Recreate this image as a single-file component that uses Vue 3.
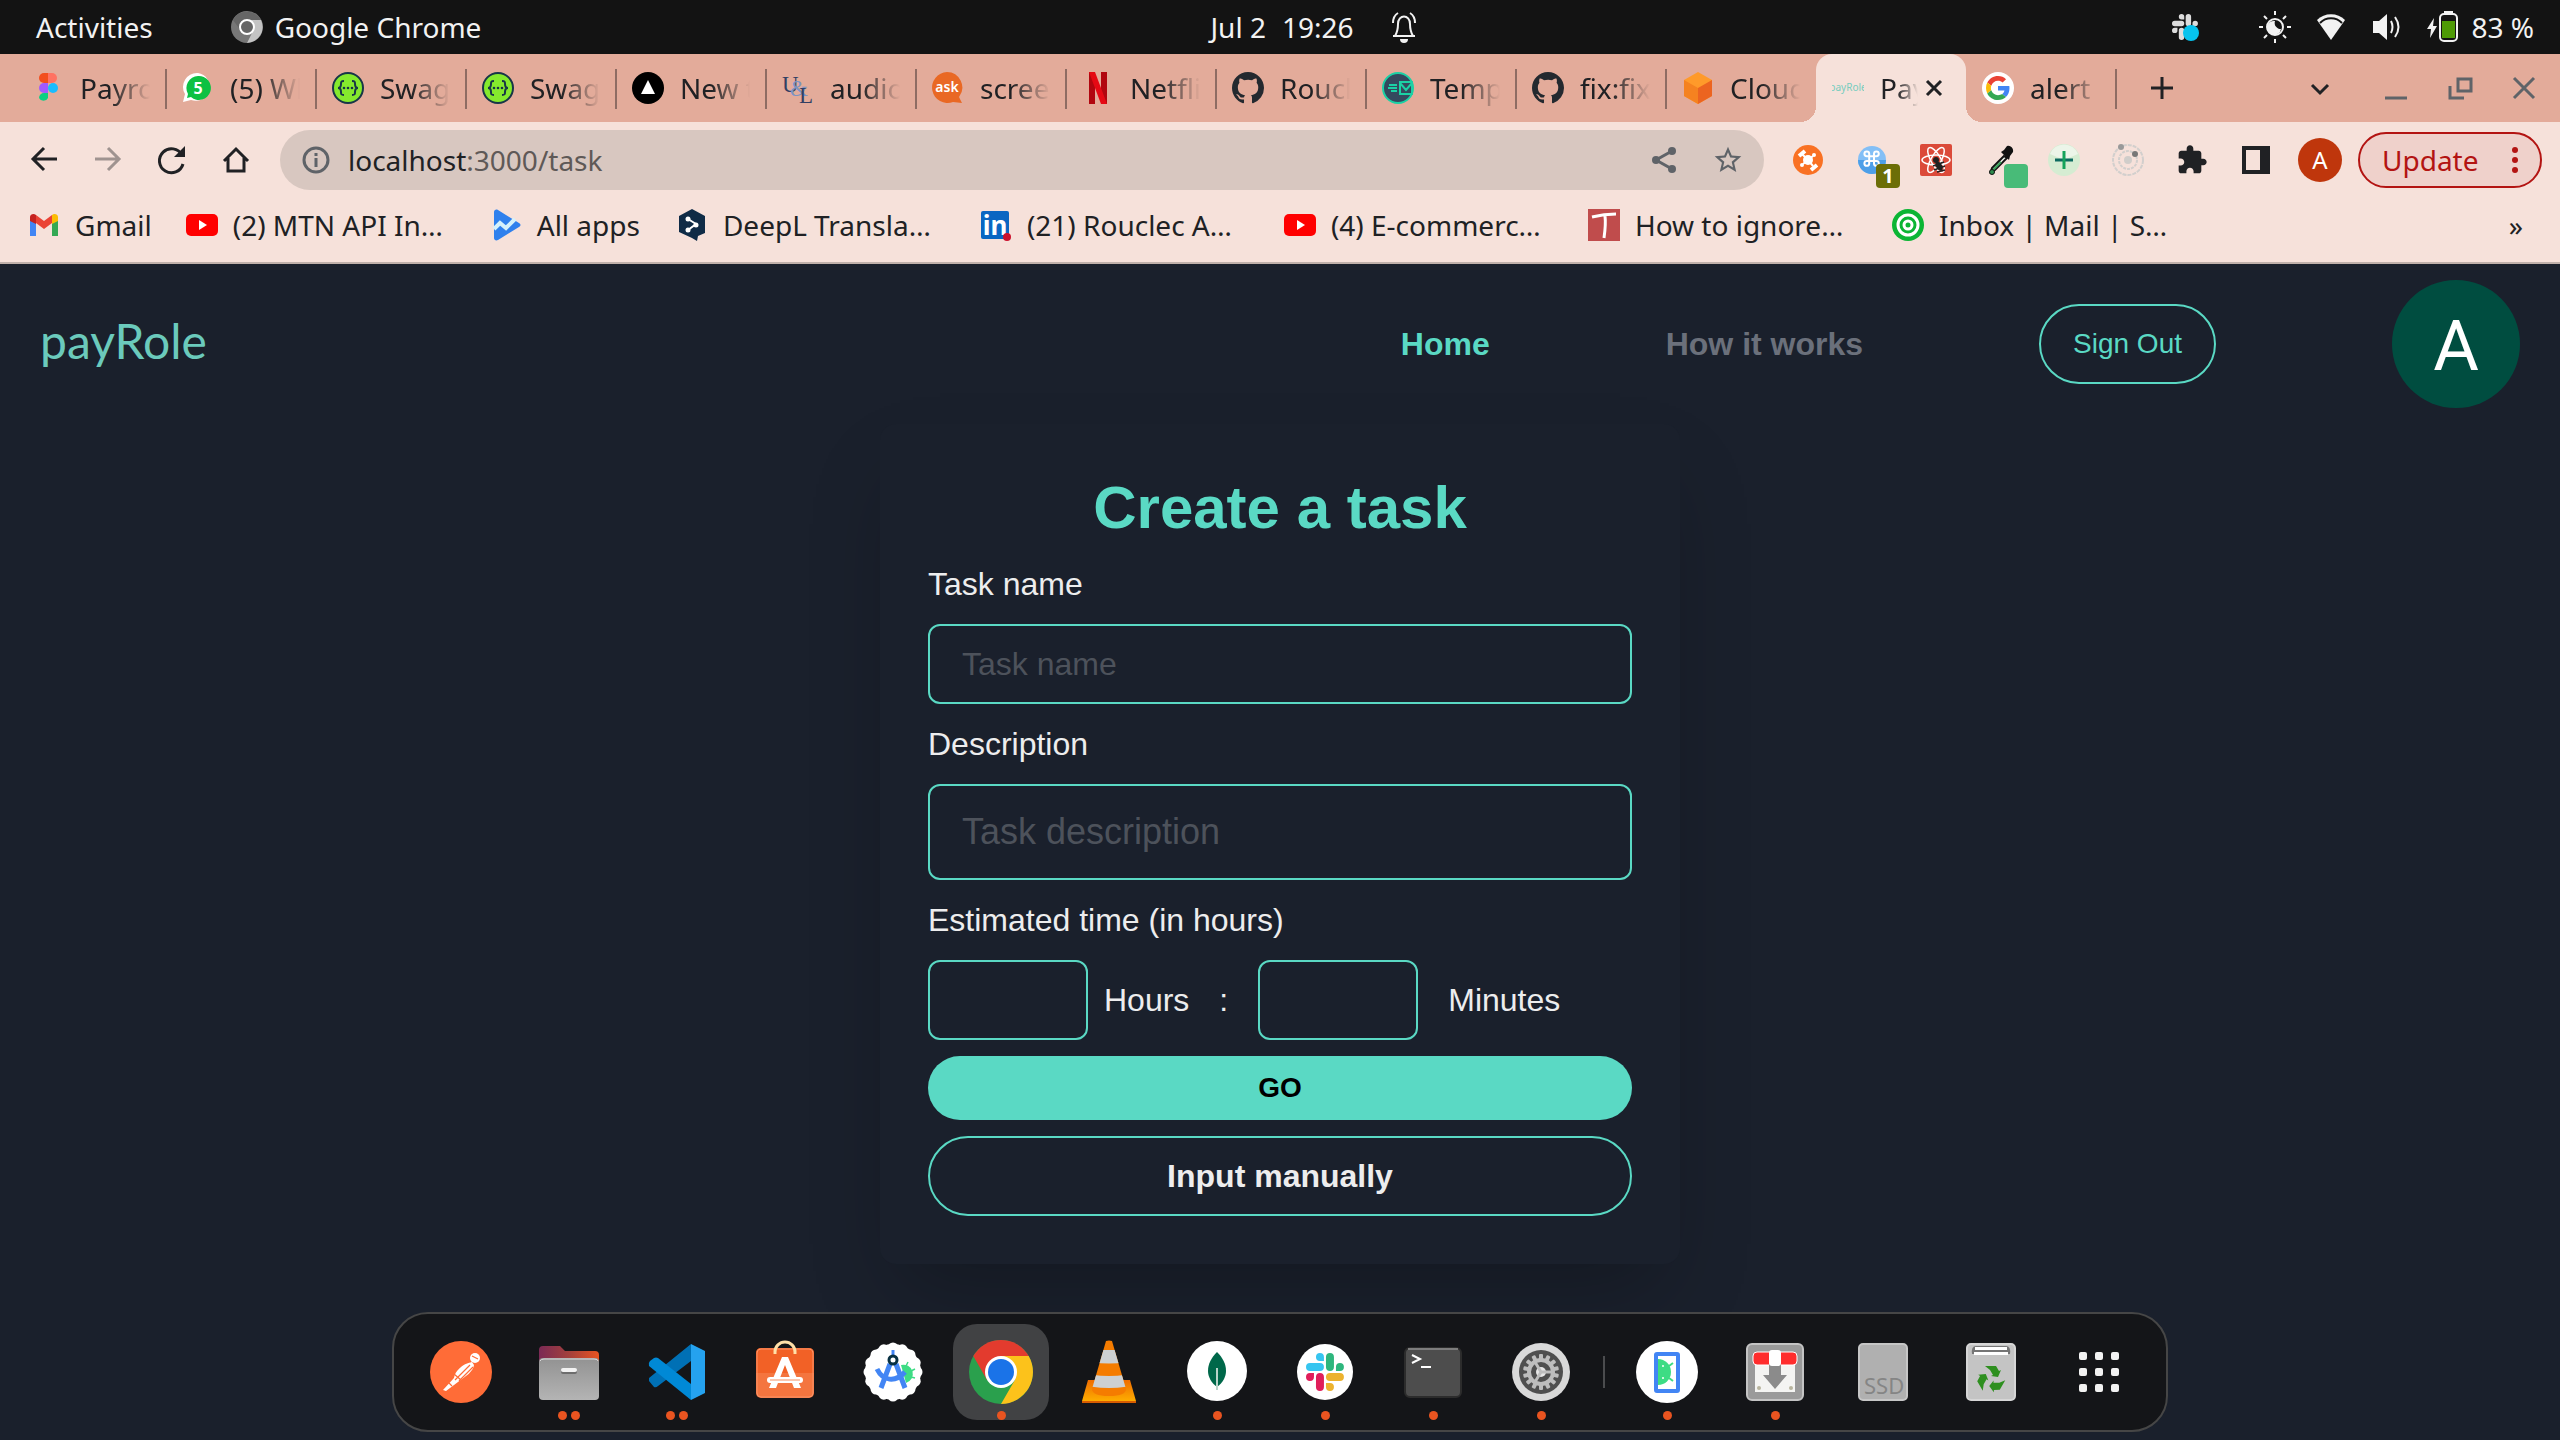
<script setup>
import { ref } from 'vue'

const github = '<path transform="scale(2)" fill="#24292f" d="M8 0C3.58 0 0 3.58 0 8c0 3.54 2.29 6.53 5.47 7.59.4.07.55-.17.55-.38 0-.19-.01-.82-.01-1.49-2.01.37-2.53-.49-2.69-.94-.09-.23-.48-.94-.82-1.13-.28-.15-.68-.52-.01-.53.63-.01 1.08.58 1.23.82.72 1.21 1.87.87 2.33.66.07-.52.28-.87.51-1.07-1.78-.2-3.64-.89-3.64-3.95 0-.87.31-1.59.82-2.15-.08-.2-.36-1.02.08-2.12 0 0 .67-.21 2.2.82.64-.18 1.32-.27 2-.27s1.36.09 2 .27c1.53-1.04 2.2-.82 2.2-.82.44 1.1.16 1.92.08 2.12.51.56.82 1.27.82 2.15 0 3.07-1.87 3.75-3.65 3.95.29.25.54.73.54 1.48 0 1.07-.01 1.93-.01 2.2 0 .21.15.46.55.38A8.01 8.01 0 0 0 16 8c0-4.42-3.58-8-8-8z"/>'
const swagger = '<circle cx="16" cy="16" r="15" fill="#85ea2d" stroke="#173647" stroke-width="2"/><g fill="none" stroke="#173647" stroke-width="2"><path d="M12 9c-3 0-3 1-3 3s0 4-3 4c3 0 3 2 3 4s0 3 3 3M20 9c3 0 3 1 3 3s0 4 3 4c-3 0-3 2-3 4s0 3-3 3"/></g><g fill="#173647"><circle cx="12" cy="16" r="1.3"/><circle cx="16" cy="16" r="1.3"/><circle cx="20" cy="16" r="1.3"/></g>'
const youtube = '<rect y="5" width="32" height="22" rx="5" fill="#f00"/><path d="M13 11v10l8-5z" fill="#fff"/>'
const slackPaths = [
  'M5.042 15.165a2.528 2.528 0 0 1-2.52 2.523A2.528 2.528 0 0 1 0 15.165a2.527 2.527 0 0 1 2.522-2.52h2.52v2.52zM6.313 15.165a2.527 2.527 0 0 1 2.521-2.52 2.527 2.527 0 0 1 2.521 2.52v6.313A2.528 2.528 0 0 1 8.834 24a2.528 2.528 0 0 1-2.521-2.522v-6.313z',
  'M8.834 5.042a2.528 2.528 0 0 1-2.521-2.52A2.528 2.528 0 0 1 8.834 0a2.528 2.528 0 0 1 2.521 2.522v2.52H8.834zM8.834 6.313a2.528 2.528 0 0 1 2.521 2.521 2.528 2.528 0 0 1-2.521 2.521H2.522A2.528 2.528 0 0 1 0 8.834a2.528 2.528 0 0 1 2.522-2.521h6.312z',
  'M18.956 8.834a2.528 2.528 0 0 1 2.522-2.521A2.528 2.528 0 0 1 24 8.834a2.528 2.528 0 0 1-2.522 2.521h-2.522V8.834zM17.688 8.834a2.528 2.528 0 0 1-2.523 2.521 2.527 2.527 0 0 1-2.52-2.521V2.522A2.527 2.527 0 0 1 15.165 0a2.528 2.528 0 0 1 2.523 2.522v6.312z',
  'M15.165 18.956a2.528 2.528 0 0 1 2.523 2.522A2.528 2.528 0 0 1 15.165 24a2.527 2.527 0 0 1-2.52-2.522v-2.522h2.52zM15.165 17.688a2.527 2.527 0 0 1-2.52-2.523 2.526 2.526 0 0 1 2.52-2.52h6.313A2.527 2.527 0 0 1 24 15.165a2.528 2.528 0 0 1-2.522 2.523h-6.313z'
]
const slack = (colours) => slackPaths.map((d, i) => `<path fill="${colours[i]}" d="${d}"/>`).join('')

const tabs = [
  { label: 'Payrole', icon: '<path d="M7 6a5 5 0 0 1 5-5h4v10h-4a5 5 0 0 1-5-5z" fill="#f24e1e"/><path d="M16 1h4a5 5 0 0 1 0 10h-4z" fill="#ff7262"/><path d="M7 16a5 5 0 0 1 5-5h4v10h-4a5 5 0 0 1-5-5z" fill="#a259ff"/><circle cx="21" cy="16" r="5" fill="#1abcfe"/><path d="M7 26a5 5 0 0 1 5-5h4v5a5 5 0 0 1-9 0z" fill="#0acf83"/>' },
  { label: '(5) WhatsApp', icon: '<path d="M16 1a14 14 0 1 1-7 27l-8 2 2-8A14 14 0 0 1 16 1z" fill="#fff"/><path d="M16 4a12 12 0 1 1-7 21l-4 1 1-4A12 12 0 0 1 16 4z" fill="#0cc143"/><text x="16" y="22" text-anchor="middle" font-size="16" font-weight="700" fill="#fff">5</text>' },
  { label: 'Swagger', icon: swagger },
  { label: 'Swagger', icon: swagger },
  { label: 'New tab', icon: '<circle cx="16" cy="16" r="16"/><path d="M16 8l7 14H9z" fill="#fff"/>' },
  { label: 'audio', icon: '<g font-family="Liberation Serif, serif"><text x="0" y="20" font-size="23" fill="#323f63">U</text><text x="8" y="24" font-size="23" fill="#7b93c4">&amp;</text><text x="17" y="31" font-size="23" fill="#323f63">L</text></g>' },
  { label: 'screen', icon: '<path d="M15 0a15.500 15.500 0 0 1 12 25l3 6-9-1A15.500 15.500 0 1 1 15 0z" fill="#e96824"/><text x="15" y="20" text-anchor="middle" font-size="14" font-weight="600" fill="#fff">ask</text>' },
  { label: 'Netflix', icon: '<path d="M7 0h6v32H7zM19 0h6v32h-6z" fill="#b1060f"/><path d="M7 0h6l12 32h-6z" fill="#e50914"/>' },
  { label: 'Rouclec', icon: github },
  { label: 'Templates', icon: '<circle cx="16" cy="16" r="15" fill="#34495e" stroke="#1bd1a5" stroke-width="2"/><path d="M18 10h12v12H18zM18 11l6 7 6-7M7 13h8M6 16h9M9 19h6" fill="none" stroke="#1bd1a5" stroke-width="2"/>' },
  { label: 'fix:fixed', icon: github },
  { label: 'Cloud', icon: '<path d="M16 0l14 8v16l-14 8L2 24V8z" fill="#ff9a2a"/><path d="M2 8l14 8v16L2 24z" fill="#f58220"/><path d="M30 8l-14 8v16l14-8z" fill="#ec6420"/>', bare: true },
  { label: 'Payrole', icon: '<text x="16" y="19" text-anchor="middle" font-size="10" fill="#77cdbf">payRole</text>', active: true },
  { label: 'alert', icon: '<circle cx="16" cy="16" r="16" fill="#fff"/><g transform="translate(4 4) scale(.5)"><path fill="#ea4335" d="M24 9.500c3.540 0 6.710 1.220 9.210 3.600l6.850-6.850C35.900 2.380 30.470 0 24 0 14.620 0 6.510 5.380 2.560 13.220l7.980 6.190C12.430 13.720 17.740 9.500 24 9.500z"/><path fill="#4285f4" d="M46.980 24.550c0-1.570-.15-3.090-.38-4.550H24v9.020h12.940c-.58 2.960-2.260 5.480-4.780 7.180l7.730 6c4.510-4.180 7.090-10.360 7.090-17.650z"/><path fill="#fbbc05" d="M10.530 28.590c-.48-1.450-.76-2.990-.76-4.590s.27-3.140.76-4.590l-7.980-6.190C.92 16.460 0 20.120 0 24c0 3.880.92 7.540 2.560 10.780l7.970-6.190z"/><path fill="#34a853" d="M24 48c6.480 0 11.930-2.130 15.890-5.810l-7.730-6c-2.150 1.450-4.920 2.300-8.160 2.300-6.260 0-11.570-4.220-13.470-9.910l-7.980 6.190C6.510 42.620 14.620 48 24 48z"/></g>' }
]

const navButtons = [
  { label: 'Back', icon: '<path d="M29 15H5M16 4L5 15l11 11"/>' },
  { label: 'Forward', dim: true, icon: '<path d="M3 15h24M16 4l11 11-11 11"/>' },
  { label: 'Reload', icon: '<path d="M27 20a12 12 0 1 1-1-9"/><path d="M29 2v11H18z" fill="#202124" stroke="none"/>' },
  { label: 'Home page', icon: '<path d="M4 17L16 5l12 12M8 14v13h16V14"/>' }
]

const extensions = [
  { label: 'Blocks', icon: '<circle cx="16" cy="16" r="15" fill="#f97123"/><circle cx="16" cy="16" r="5" fill="#fff"/><path d="M16 16l-6-6M16 16l5-4M16 16l-5 4M16 16l5 6" stroke="#fff" stroke-width="2"/><path d="M7 12l6-5M19 26l6-5" stroke="#fff" stroke-width="4"/><circle cx="22" cy="11" r="2" fill="#fff"/><circle cx="10" cy="21" r="2" fill="#fff"/>' },
  { label: 'Shortcuts', badge: '1', icon: '<circle cx="16" cy="16" r="14" fill="#83bff6"/><path d="M2 16a14 14 0 0 0 28 0z" fill="#4d9fe8"/><path transform="translate(6 5) scale(.8)" d="M18 3a3 3 0 0 0-3 3v12a3 3 0 1 0 3-3H6a3 3 0 1 0 3 3V6a3 3 0 1 0-3 3h12a3 3 0 0 0 0-6z" fill="none" stroke="#fff" stroke-width="2.500"/>' },
  { label: 'React tools', icon: '<rect width="32" height="32" rx="2" fill="#db4a39"/><g fill="none" stroke="#fff" stroke-width="1.500"><ellipse cx="16" cy="16" rx="14" ry="5"/><ellipse cx="16" cy="16" rx="14" ry="5" transform="rotate(60 16 16)"/><ellipse cx="16" cy="16" rx="14" ry="5" transform="rotate(120 16 16)"/></g><g fill="#222"><circle cx="16" cy="16" r="3"/><ellipse cx="19" cy="22" rx="3" ry="5" transform="rotate(-30 19 22)"/></g><path d="M13 22l11-4M14 26l11-4M17 28l8-2" stroke="#222" stroke-width="1.500"/>' },
  { label: 'Colour picker', swatch: true, icon: '<path d="M20 12L8 24l-1 4 4-2 12-12z" fill="#e9f2ea" stroke="#111" stroke-width="2"/><path d="M17 18l-8 8" stroke="#38a05a" stroke-width="2"/><path d="M17 8l8 8 1-4 3-4a5 5 0 0 0-6-6l-3 4z" fill="#111"/><circle cx="8" cy="28" r="2.500" fill="#2e8b4d" stroke="#111"/>' },
  { label: 'Add', icon: '<circle cx="16" cy="16" r="16" fill="#d5ecd2"/><path d="M2 10a15 15 0 0 1 28 0l-14 6z" fill="#ecf5e9"/><path d="M7 16h18" stroke="#0c6b60" stroke-width="3"/><path d="M16 7v18" stroke="#14a35b" stroke-width="3"/>' },
  { label: 'Orbit', icon: '<g fill="none" stroke="#d2cfcd" stroke-width="2"><circle cx="16" cy="16" r="15" stroke-dasharray="4 1"/><circle cx="16" cy="16" r="9" stroke-dasharray="3 1"/></g><circle cx="16" cy="16" r="4" fill="#d0cdca"/><circle cx="9" cy="3" r="3" fill="#999"/><circle cx="23" cy="10" r="3" fill="#777"/>' },
  { label: 'Extensions', icon: '<path transform="scale(1.333)" fill="#202124" d="M20.500 11H19V7c0-1.100-.9-2-2-2h-4V3.500C13 2.120 11.880 1 10.500 1S8 2.120 8 3.500V5H4c-1.100 0-1.990.9-1.990 2v3.800H3.500c1.490 0 2.700 1.210 2.700 2.700s-1.210 2.700-2.700 2.700H2V20c0 1.100.9 2 2 2h3.800v-1.500c0-1.490 1.210-2.700 2.700-2.700 1.490 0 2.700 1.210 2.700 2.700V22H17c1.100 0 2-.9 2-2v-4h1.500c1.380 0 2.500-1.120 2.500-2.500S21.880 11 20.500 11z"/>' },
  { label: 'Side panel', icon: '<path d="M2 2h28v28H2zM6 6v20h14V6z" fill="#202124" fill-rule="evenodd"/>' }
]

const bookmarks = [
  { label: 'Gmail', icon: '<path d="M2 8v19h6V14z" fill="#4285f4"/><path d="M30 8v19h-6V14z" fill="#34a853"/><path d="M2 8l6 6 8 6 8-6V6l-8 6-8-6z" fill="#ea4335"/><path d="M2 12V8c0-3 4-4 6-2v9z" fill="#c5221f"/><path d="M30 12V8c0-3-4-4-6-2v9z" fill="#fbbc04"/>' },
  { label: '(2) MTN API In…', long: true, icon: youtube },
  { label: 'All apps', icon: '<path d="M4 3c0-2 2-3 4-2l21 13c2 1 2 3 0 4L8 31c-2 1-4 0-4-2z" fill="#2f80ed"/><path d="M4 20l6-6 6 5 9-9" fill="none" stroke="#d5f1fb" stroke-width="4"/>' },
  { label: 'DeepL Transla…', long: true, icon: '<path d="M16 0l13 7v17l-7 3-1 5-5-3-13-6V7z" fill="#0f2b46"/><path d="M12 10l8 5-8 6" fill="none" stroke="#fff" stroke-width="2"/><g fill="#fff"><circle cx="12" cy="10" r="2.500"/><circle cx="20" cy="16" r="2.500"/><circle cx="12" cy="21" r="2.500"/></g>' },
  { label: '(21) Rouclec A…', long: true, icon: '<rect x="1" y="2" width="28" height="28" rx="2" fill="#0a66c2"/><text x="15" y="26" text-anchor="middle" font-size="26" font-weight="700" fill="#fff">in</text><circle cx="27" cy="28" r="4" fill="#cb112d"/>' },
  { label: '(4) E-commerc…', long: true, icon: youtube },
  { label: 'How to ignore…', long: true, icon: '<rect width="32" height="32" fill="#c04c4c"/><path d="M4 8c8-2 16-3 24-3M17 7c1 8 0 15-1 22" fill="none" stroke="#fff" stroke-width="3"/>' },
  { label: 'Inbox | Mail | S…', long: true, icon: '<circle cx="16" cy="16" r="16" fill="#0bb534"/><circle cx="16" cy="16" r="10" fill="none" stroke="#fff" stroke-width="3"/><circle cx="16" cy="16" r="4" fill="none" stroke="#fff" stroke-width="3"/>' }
]

const scallop = Array.from({ length: 16 }, (_, i) => {
  const a = (i * Math.PI) / 8
  return `<circle cx="${(32 + 24 * Math.cos(a)).toFixed(1)}" cy="${(32 + 24 * Math.sin(a)).toFixed(1)}" r="5.5" fill="#fff"/>`
}).join('')
const teeth = Array.from({ length: 14 }, (_, i) => `<rect x="30" y="14" width="4" height="7" rx="1" transform="rotate(${i * 25.714} 32 32)" fill="#bdbdbd"/>`).join('')

const dockApps = [
  { label: 'Postman', dots: 0, icon: '<circle cx="32" cy="32" r="31" fill="#ff6c37"/><g fill="#fff"><circle cx="46" cy="18" r="5"/><path d="M43 22l2 3c-1 7-8 11-16 17L17 51l-3-1 11-12c1-7 8-14 18-16z"/></g><path d="M41 25L26 40M44 27L30 41M25 34l7 6M20 43l3 3M43 16l6 3" stroke="#ff6c37" stroke-width="1.200"/>' },
  { label: 'Files', dots: 2, icon: '<defs><linearGradient id="folder"><stop offset="0" stop-color="#7b2a55"/><stop offset=".5" stop-color="#a3403c"/><stop offset="1" stop-color="#e95420"/></linearGradient><linearGradient id="drawer" x2="0" y2="1"><stop offset="0" stop-color="#929292"/><stop offset="1" stop-color="#b4b4b4"/></linearGradient></defs><path d="M2 25V10a4 4 0 0 1 4-4h17l5 5h30a4 4 0 0 1 4 4v12z" fill="url(#folder)"/><rect x="2" y="18" width="60" height="42" rx="4" fill="url(#drawer)"/><path d="M3 21q1-2 4-2h50q4 0 4 2" fill="none" stroke="#dcdcdc"/><rect x="24" y="30" width="16" height="4" rx="2" fill="#6d6d6d"/><rect x="24" y="28" width="16" height="4" rx="2" fill="#f2f2f2"/>' },
  { label: 'Visual Studio Code', dots: 2, icon: '<path d="M4 41l5 6q2 1 4-1l33-25V4L4 38z" fill="#0070b5"/><path d="M4 26q-1-3 1-5l4-3q2-1 4 0l33 26v16z" fill="#0089d6"/><path d="M46 4l14 7v42l-14 7z" fill="#25a2ef"/>' },
  { label: 'Software', dots: 0, icon: '<rect x="3" y="8" width="58" height="50" rx="5" fill="#f4753f"/><path d="M3 33V13a5 5 0 0 1 5-5h48a5 5 0 0 1 5 5v20z" fill="#f26126"/><rect x="4" y="9" width="56" height="48" rx="4" fill="none" stroke="#f99468"/><path d="M22 14V12a10 10 0 0 1 20 0v2" fill="none" stroke="#ffe0a8" stroke-width="3"/><path d="M29 17h6l13 31h-7l-9-23-9 23h-7z" fill="#fff"/><rect x="14" y="37" width="36" height="6" rx="3" fill="#fff"/><path d="M17 40h30" stroke="#f9c7b0" stroke-width="2"/>' },
  { label: 'Android Studio', dots: 0, icon: scallop + '<circle cx="32" cy="32" r="28" fill="#fff"/><path d="M40 25a9 9 0 0 1 5 18z" fill="#3ddc84"/><path d="M45 26l2-4M50 31l4-2M50 37l4 1" stroke="#3ddc84" stroke-width="1.500"/><g fill="none" stroke="#4285f4"><path d="M32 10v6" stroke-width="3"/><path d="M29 24L20 48M35 24l9 24" stroke-width="5"/><path d="M16 29c6 12 18 14 28 3" stroke-width="5"/></g><circle cx="32" cy="20" r="4" fill="#fff" stroke="#073042" stroke-width="3"/>' },
  { label: 'Google Chrome', dots: 1, active: true, icon: '<circle cx="32" cy="32" r="32" fill="#2aa04d"/><path d="M32 32L4.300 16A32 32 0 0 1 59.700 16z" fill="#e33b2e"/><path d="M4.300 16L18 40l14-24z" fill="#e33b2e"/><path d="M32 16h27.700A32 32 0 0 1 32 64l13.900-24z" fill="#fcc21b"/><circle cx="32" cy="32" r="16" fill="#fff"/><circle cx="32" cy="32" r="13" fill="#1a73e8"/>' },
  { label: 'VLC', dots: 0, icon: '<defs><linearGradient id="cone" x2="0" y2="1"><stop offset="0" stop-color="#ef6c00"/><stop offset="1" stop-color="#ffb300"/></linearGradient><clipPath id="coneClip"><path d="M29 1q3-1 6 0l14 48q0 7-17 7t-17-7z"/></clipPath></defs><path d="M11 40h42l6 21v2H5v-2z" fill="url(#cone)"/><path d="M5 61h54v2H5z" fill="#d85c00"/><g clip-path="url(#coneClip)"><path d="M10 0h44v60H10z" fill="#f57c00"/><path d="M10 10h44v12q-22 3-44 0z" fill="#cdd0d2"/><path d="M10 34q22 4 44 0v12q-22 4-44 0z" fill="#cdd0d2"/></g>' },
  { label: 'MongoDB Compass', dots: 1, icon: '<circle cx="32" cy="31" r="30" fill="#fff"/><path d="M32 12c12 12 12 26 0 35-12-9-12-23 0-35z" fill="#00684a"/><path d="M32 28v22" stroke="#b9d3c9" stroke-width="2"/>' },
  { label: 'Slack', dots: 1, icon: '<circle cx="32" cy="32" r="28" fill="#fff"/><g transform="translate(13 13) scale(1.580)">' + slack(['#e01e5a', '#36c5f0', '#2eb67d', '#ecb22e']) + '</g>' },
  { label: 'Terminal', dots: 1, icon: '<rect x="4" y="8" width="56" height="49" rx="5" fill="#4d4d4d" stroke="#2c2c2c" stroke-width="2"/><path d="M7 9h50" stroke="#7d7d7d" stroke-width="2"/><path d="M11 15l8 4-8 4M20 27h10" fill="none" stroke="#fff" stroke-width="2"/>' },
  { label: 'Settings', dots: 1, icon: '<circle cx="32" cy="32" r="29" fill="#d9d9d9"/><circle cx="32" cy="32" r="22" fill="#4f4f4f"/>' + teeth + '<circle cx="32" cy="32" r="12" fill="none" stroke="#bdbdbd" stroke-width="4"/><circle cx="32" cy="32" r="5" fill="#e6e6e6"/><path d="M32 32h11M32 32l-6 10M32 32l-6-10" stroke="#bdbdbd" stroke-width="3"/>' }
]

const dockPlaces = [
  { label: 'Emulator', dots: 1, icon: '<circle cx="32" cy="32" r="31" fill="#fff"/><rect x="21" y="14" width="22" height="37" rx="1" fill="none" stroke="#4285f4" stroke-width="4"/><path d="M23 19a13 13 0 0 1 0 26z" fill="#3ddc84"/><path d="M34 26l4-3M34 38l4 3" stroke="#3ddc84" stroke-width="2"/><circle cx="28" cy="26" r="1" fill="#fff"/><circle cx="28" cy="38" r="1" fill="#fff"/>' },
  { label: 'Installer', dots: 1, icon: '<rect x="4" y="4" width="56" height="56" rx="5" fill="#9a9a9a" stroke="#c4c4c4" stroke-width="2"/><path d="M12 20h40v32H12z" fill="#f4f4f2"/><rect x="10" y="12" width="44" height="13" rx="4" fill="#ff2d2d" stroke="#fff"/><path d="M26 24h12v11h6L32 49 20 35h6z" fill="#8b8b8b"/><rect x="26" y="10" width="12" height="16" rx="3" fill="#fff"/><circle cx="16" cy="48" r="2" fill="#b8b49e"/><circle cx="48" cy="48" r="2" fill="#b8b49e"/>' },
  { label: 'SSD drive', dots: 0, icon: '<rect x="8" y="4" width="48" height="56" rx="4" fill="#b0b0b0" stroke="#c6c6c6" stroke-width="2"/><text x="13" y="54" font-size="22" fill="#858585">SSD</text>' },
  { label: 'Trash', dots: 0, icon: '<rect x="8" y="4" width="48" height="56" rx="4" fill="#c4c4c4" stroke="#d6d6d6" stroke-width="2"/><path d="M13 14q-1-8 4-8h30q5 0 4 8z" fill="#757575"/><path d="M16 7h32v3H16zM15 12h34v3H15z" fill="#fff"/><g fill="#2e8f1f"><path d="M26 26h11l3 5 2-1-3 7-7-1 2-1-3-5z"/><path d="M26 26h11l3 5 2-1-3 7-7-1 2-1-3-5z" transform="rotate(120 32 39)"/><path d="M26 26h11l3 5 2-1-3 7-7-1 2-1-3-5z" transform="rotate(240 32 39)"/></g>' },
  { label: 'Show applications', dots: 0, icon: '<g fill="#f2f2f2">' + [12, 28, 44].flatMap((y) => [12, 28, 44].map((x) => `<rect x="${x}" y="${y}" width="8" height="8" rx="2"/>`)).join('') + '</g>' }
]

const trayIcons = [
  { label: 'Night light', icon: '<circle cx="16" cy="16" r="8" fill="none" stroke="#f2f2f2" stroke-width="2"/><path d="M16 10a6 6 0 0 0 6 8 7 7 0 1 1-6-8z" fill="#f2f2f2"/><path d="M16 0v4M16 28v4M0 16h4M28 16h4M5 5l3 3M24 24l3 3M27 5l-3 3M8 24l-3 3" stroke="#f2f2f2" stroke-width="2"/>' },
  { label: 'Wi-Fi', icon: '<path d="M2 9a20 20 0 0 1 28 0L16 29z" fill="#f2f2f2"/><path d="M5 12a15 15 0 0 1 22 0" fill="none" stroke="#131313" stroke-width="2"/>' },
  { label: 'Volume', icon: '<path d="M2 10h6l8-7v26l-8-7H2z" fill="#f2f2f2"/><path d="M20 10q3 6 0 12M24 6q7 10 0 20" fill="none" stroke="#f2f2f2" stroke-width="2"/>' }
]

const taskName = ref('')
const description = ref('')
const hours = ref('')
const minutes = ref('')
</script>

<template>
  <div class="desktop">
    <header class="system-bar">
      <div class="system-left">
        <span>Activities</span>
        <span class="current-app">
          <svg class="icon" viewBox="0 0 32 32" aria-hidden="true"><circle cx="16" cy="16" r="16" fill="#777" /><path d="M16 9h14a16 16 0 0 1-14 23l6-12z" fill="#c4c4c4" /><path d="M2 9a16 16 0 0 1 28 0H16l-6 11z" fill="#666" /><circle cx="16" cy="16" r="7" fill="#666" stroke="#fff" stroke-width="2" /></svg>
          Google Chrome
        </span>
      </div>
      <div class="system-clock">
        <span>Jul 2</span><span>19:26</span>
        <svg class="icon bell" viewBox="0 0 32 32" aria-hidden="true"><path d="M5 25h22M7 25q3-5 3-12c0-10 12-10 12 0q0 7 3 12M5 12q0-7 5-10M27 12q0-7-5-10" fill="none" stroke="#f2f2f2" stroke-width="2" /><path d="M12 28h8a4 4 0 0 1-8 0z" fill="#f2f2f2" /></svg>
      </div>
      <div class="system-tray">
        <svg class="icon slack-tray" viewBox="0 0 32 32" aria-hidden="true"><g transform="translate(3 3) scale(1.08)" v-html="slack(['#ddd', '#ddd', '#ddd', '#ddd'])" /><circle cx="22" cy="22" r="8" fill="#06c3ee" /></svg>
        <svg v-for="t in trayIcons" :key="t.label" class="icon" viewBox="0 0 32 32" role="img" :aria-label="t.label" v-html="t.icon" />
        <span class="battery">
          <svg class="icon" viewBox="0 0 32 32" aria-hidden="true"><path d="M7 7L0 18h4l-1 9 7-12H6z" fill="#f2f2f2" /><rect x="13" y="3" width="17" height="27" rx="4" fill="none" stroke="#f2f2f2" stroke-width="2" /><path d="M17 0h9v3h-9z" fill="#f2f2f2" /><path d="M15 10h13v17H15z" fill="#4e9a06" /></svg>
          83 %
        </span>
      </div>
    </header>

    <div class="tab-strip">
      <div v-for="(tab, i) in tabs" :key="i" class="tab" :class="{ active: tab.active, bare: tab.bare || tab.active }">
        <svg class="icon" viewBox="0 0 32 32" aria-hidden="true" v-html="tab.icon" />
        <span class="tab-label">{{ tab.label }}</span>
        <button v-if="tab.active" class="plain close" aria-label="Close tab">
          <svg class="icon line" viewBox="0 0 32 32"><path d="M9 9l14 14M23 9L9 23" /></svg>
        </button>
      </div>
      <button class="plain new-tab" aria-label="New tab"><svg class="icon line" viewBox="0 0 32 32"><path d="M16 5v22M5 16h22" /></svg></button>
      <div class="window-controls">
        <button class="plain search-tabs" aria-label="Search tabs"><svg class="icon line" viewBox="0 0 32 32"><path d="M8 13l8 8 8-8" /></svg></button>
        <button class="plain grey" aria-label="Minimise"><svg class="icon line" viewBox="0 0 32 32"><path d="M5 26h22" /></svg></button>
        <button class="plain grey" aria-label="Restore"><svg class="icon line" viewBox="0 0 32 32"><path d="M14 7h13v12H14zM6 14v12h14" /></svg></button>
        <button class="plain grey" aria-label="Close window"><svg class="icon line" viewBox="0 0 32 32"><path d="M6 6l20 20M26 6L6 26" /></svg></button>
      </div>
    </div>

    <div class="toolbar">
      <button v-for="b in navButtons" :key="b.label" class="plain" :class="{ dim: b.dim }" :aria-label="b.label">
        <svg class="icon line" viewBox="0 0 32 32" v-html="b.icon" />
      </button>
      <div class="omnibox">
        <svg class="icon line grey" viewBox="0 0 32 32" aria-hidden="true"><circle cx="16" cy="16" r="12" /><path d="M16 14v9M16 9v3" /></svg>
        <span class="address">localhost<span class="path">:3000/task</span></span>
        <button class="plain" aria-label="Share"><svg class="icon" viewBox="0 0 32 32"><path d="M24 7L8 16l16 9" fill="none" stroke="#5f6368" stroke-width="3" /><g fill="#5f6368"><circle cx="24" cy="7" r="4" /><circle cx="8" cy="16" r="4" /><circle cx="24" cy="25" r="4" /></g></svg></button>
        <button class="plain" aria-label="Bookmark"><svg class="icon" viewBox="0 0 24 24"><path fill="#5f6368" d="M22 9.240l-7.190-.62L12 2 9.190 8.630 2 9.240l5.460 4.730L5.820 21 12 17.270 18.180 21l-1.630-7.030L22 9.240zM12 15.400l-3.760 2.270 1-4.280-3.320-2.880 4.380-.38L12 6.100l1.710 4.040 4.380.38-3.320 2.880 1 4.280L12 15.400z" /></svg></button>
      </div>
      <button v-for="e in extensions" :key="e.label" class="plain extension" :aria-label="e.label">
        <svg class="icon" viewBox="0 0 32 32" v-html="e.icon" />
        <span v-if="e.badge" class="badge">{{ e.badge }}</span>
        <span v-if="e.swatch" class="badge swatch"></span>
      </button>
      <button class="plain" aria-label="Profile"><span class="profile">A</span></button>
      <button class="update">Update <svg class="dots" viewBox="0 0 6 28" aria-hidden="true"><circle cx="3" cy="4" r="3" /><circle cx="3" cy="14" r="3" /><circle cx="3" cy="24" r="3" /></svg></button>
    </div>

    <nav class="bookmarks" aria-label="Bookmarks">
      <a v-for="b in bookmarks" :key="b.label" href="#" class="bookmark">
        <svg class="icon" viewBox="0 0 32 32" aria-hidden="true" v-html="b.icon" />
        <span :class="{ long: b.long }">{{ b.label }}</span>
      </a>
      <button class="plain more" aria-label="More bookmarks">»</button>
    </nav>

    <div class="page">
      <header class="site-header">
        <a href="#" class="logo">payRole</a>
        <nav class="site-nav">
          <a href="#" class="current">Home</a>
          <a href="#">How it works</a>
          <button class="sign-out">Sign Out</button>
          <span class="avatar">A</span>
        </nav>
      </header>

      <form class="card" @submit.prevent>
        <h1>Create a task</h1>
        <label for="task-name">Task name</label>
        <input id="task-name" v-model="taskName" type="text" placeholder="Task name" />
        <label for="description">Description</label>
        <textarea id="description" v-model="description" rows="1" placeholder="Task description"></textarea>
        <label for="hours">Estimated time (in hours)</label>
        <div class="duration">
          <input id="hours" v-model="hours" type="text" />
          <label for="hours" class="unit">Hours</label>
          <span>:</span>
          <input id="minutes" v-model="minutes" type="text" />
          <label for="minutes">Minutes</label>
        </div>
        <button class="go" type="submit">GO</button>
        <button class="manual" type="button">Input manually</button>
      </form>
    </div>

    <nav class="dock" aria-label="Dock">
      <button v-for="app in dockApps" :key="app.label" class="tile" :class="{ focused: app.active }" :aria-label="app.label">
        <svg viewBox="0 0 64 64" v-html="app.icon" />
        <span v-if="app.dots" class="running"><i v-for="n in app.dots" :key="n"></i></span>
      </button>
      <span class="divider"></span>
      <button v-for="app in dockPlaces" :key="app.label" class="tile" :aria-label="app.label">
        <svg viewBox="0 0 64 64" v-html="app.icon" />
        <span v-if="app.dots" class="running"><i v-for="n in app.dots" :key="n"></i></span>
      </button>
    </nav>
  </div>
</template>

<style>
body {
  margin: 0;
  background: #1a202c;
}
</style>

<style scoped>
.desktop {
  position: relative;
  display: flex;
  flex-direction: column;
  min-height: 100vh;
  overflow: hidden;
  font-family: "Noto Sans", "Open Sans", sans-serif;
  font-size: 28px;
  line-height: 40px;
  color: #202124;
}
.desktop * {
  box-sizing: border-box;
}
a {
  color: inherit;
  text-decoration: none;
}
button {
  font: inherit;
  cursor: pointer;
}
.icon {
  display: block;
  flex: none;
  width: 32px;
  height: 32px;
}
.line {
  fill: none;
  stroke: #202124;
  stroke-width: 3;
}
.grey.line,
.grey .line {
  stroke: #5f6368;
}
.plain {
  display: flex;
  flex: none;
  align-items: center;
  justify-content: center;
  width: 64px;
  padding: 0;
  border: 0;
  background: none;
  color: inherit;
}
.dim {
  opacity: 0.4;
}

.system-bar {
  display: grid;
  grid-template-columns: 1fr auto 1fr;
  align-items: center;
  height: 54px;
  padding: 0 26px 0 36px;
  background: #131313;
  color: #f2f2f2;
  white-space: nowrap;
}
.system-left,
.current-app,
.system-clock,
.system-tray,
.battery {
  display: flex;
  align-items: center;
}
.system-left {
  gap: 78px;
}
.current-app {
  gap: 12px;
}
.system-clock {
  gap: 16px;
  padding-left: 60px;
}
.bell {
  margin-left: 18px;
}
.system-tray {
  justify-content: flex-end;
  gap: 24px;
}
.slack-tray {
  margin-right: 34px;
}
.battery {
  gap: 12px;
}

.tab-strip {
  display: flex;
  height: 68px;
  padding-left: 16px;
  background: #e3ab9a;
}
.tab {
  position: relative;
  display: flex;
  flex: 0 1 150px;
  align-items: center;
  gap: 16px;
  min-width: 0;
  padding: 0 16px;
}
.tab:not(.bare)::after {
  content: "";
  position: absolute;
  right: -1px;
  top: 15px;
  width: 2px;
  height: 40px;
  background: #8e6c63;
}
.tab-label {
  flex: 1;
  min-width: 0;
  overflow: hidden;
  white-space: nowrap;
  mask-image: linear-gradient(90deg, #000 45%, transparent);
}
.active {
  gap: 0;
  border-radius: 16px 16px 0 0;
  background: #f6e1da;
}
.active .tab-label {
  margin-left: 16px;
}
.active::before,
.active.bare::after {
  content: "";
  position: absolute;
  bottom: 0;
  width: 16px;
  height: 16px;
}
.active::before {
  right: 100%;
  background: radial-gradient(circle at 0 0, transparent 16px, #f6e1da 16px);
}
.active.bare::after {
  left: 100%;
  background: radial-gradient(circle at 100% 0, transparent 16px, #f6e1da 16px);
}
.close {
  width: 32px;
}
.new-tab {
  margin-left: 14px;
}
.window-controls {
  display: flex;
  margin-left: auto;
  padding-right: 4px;
}
.search-tabs {
  margin-right: 12px;
}

.toolbar {
  display: flex;
  align-items: center;
  padding: 8px 18px 8px 12px;
  background: #f6e1da;
}
.omnibox {
  display: flex;
  flex: 1;
  align-items: center;
  gap: 16px;
  min-width: 0;
  height: 60px;
  margin: 0 12px;
  padding: 0 4px 0 20px;
  border-radius: 30px;
  background: #d8c7c0;
}
.omnibox .plain + .plain {
  margin-left: -16px;
}
.address {
  flex: 1;
}
.path {
  color: #5f5957;
}
.extension {
  position: relative;
  height: 60px;
}
.badge {
  position: absolute;
  right: 4px;
  bottom: 2px;
  width: 24px;
  height: 24px;
  border-radius: 4px;
  background: #6c6e07;
  color: #fff;
  font-size: 20px;
  font-weight: 700;
  line-height: 24px;
}
.swatch {
  background: #48bb78;
}
.profile {
  width: 44px;
  height: 44px;
  border-radius: 50%;
  background: #bf360c;
  color: #fff;
  font-size: 24px;
  line-height: 44px;
}
.update {
  display: flex;
  align-items: center;
  justify-content: space-between;
  width: 184px;
  height: 56px;
  margin-left: 6px;
  padding: 0 22px;
  border: 2px solid #b31412;
  border-radius: 28px;
  background: #efd1cb;
  color: #b31412;
}
.dots {
  width: 6px;
  height: 28px;
  fill: #b31412;
}

.bookmarks {
  display: flex;
  align-items: center;
  gap: 36px;
  height: 66px;
  padding: 0 28px 10px;
  border-bottom: 2px solid #c0b0aa;
  background: #f6e1da;
  white-space: nowrap;
}
.bookmark {
  display: flex;
  align-items: center;
  gap: 15px;
}
.bookmark:first-child {
  margin-right: -2px;
}
.long {
  width: 221px;
}
.more {
  width: 32px;
  margin-left: auto;
}

.page {
  flex: 1;
  padding-bottom: 176px;
  background: #1a202c;
  font-family: "Liberation Sans", Arial, sans-serif;
  font-size: 32px;
  color: #ededee;
}
.site-header {
  display: flex;
  align-items: center;
  justify-content: space-between;
  padding: 16px 40px;
}
.logo {
  padding-bottom: 6px;
  font-family: Lato, sans-serif;
  font-size: 48px;
  line-height: 64px;
  color: #6bcabc;
}
.site-nav {
  display: flex;
  align-items: center;
  gap: 176px;
  font-weight: 700;
  color: #6b707b;
}
.current {
  color: #5ad9c4;
}
.sign-out {
  height: 80px;
  padding: 0 32px;
  border: 2px solid #5ad9c4;
  border-radius: 40px;
  background: none;
  color: #5ad9c4;
  font-size: 28px;
  font-weight: 400;
}
.avatar {
  width: 128px;
  height: 128px;
  border-radius: 50%;
  background: #004d40;
  color: #fff;
  font-family: Roboto, sans-serif;
  font-size: 70px;
  font-weight: 400;
  line-height: 132px;
  text-align: center;
}

.card {
  display: flex;
  flex-direction: column;
  width: 100%;
  max-width: 800px;
  margin: 0 auto;
  padding: 48px;
  border-radius: 16px;
  background: #1a202c;
  box-shadow: 0 40px 80px -20px rgba(0, 0, 0, 0.25);
}
h1 {
  margin: 0 0 16px;
  color: #5ad9c4;
  font-size: 60px;
  line-height: 72px;
  text-align: center;
}
label {
  line-height: 48px;
}
input,
textarea {
  display: block;
  width: 100%;
  height: 80px;
  padding: 0 32px;
  border: 2px solid #5ad9c4;
  border-radius: 12px;
  outline: 0;
  background: transparent;
  color: inherit;
  font: inherit;
}
.card > input,
.card > textarea {
  margin: 16px 0;
}
textarea {
  height: 96px;
  padding: 24px 32px;
  font-size: 36px;
  line-height: 44px;
  resize: none;
  overflow: hidden;
}
::placeholder {
  color: #4d525b;
  opacity: 1;
}
.duration {
  display: flex;
  align-items: center;
  gap: 30px;
  margin: 16px 0;
}
.duration input {
  flex: 0 0 160px;
}
.unit {
  margin-left: -14px;
}
.go,
.manual {
  border-radius: 40px;
  font-weight: 700;
}
.go {
  height: 64px;
  border: 0;
  background: #5ad9c4;
  color: #000;
  font-size: 28px;
}
.manual {
  height: 80px;
  margin-top: 16px;
  border: 2px solid #5ad9c4;
  background: none;
  color: inherit;
}

.dock {
  position: absolute;
  bottom: 8px;
  left: 50%;
  display: flex;
  align-items: center;
  gap: 12px;
  height: 120px;
  padding: 0 19px;
  border: 2px solid #464646;
  border-radius: 36px;
  background: #141518;
  transform: translateX(-50%);
}
.tile {
  position: relative;
  display: flex;
  align-items: center;
  justify-content: center;
  width: 96px;
  height: 96px;
  padding: 0;
  border: 0;
  border-radius: 24px;
  background: none;
}
.tile svg {
  width: 64px;
  height: 64px;
}
.focused {
  background: #414244;
}
.running {
  position: absolute;
  right: 0;
  bottom: 0;
  left: 0;
  display: flex;
  justify-content: center;
  gap: 4px;
}
.running i {
  width: 9px;
  height: 9px;
  border-radius: 50%;
  background: #e95420;
}
.divider {
  width: 2px;
  height: 32px;
  margin: 0 2px;
  background: #4b4c4e;
}
</style>
